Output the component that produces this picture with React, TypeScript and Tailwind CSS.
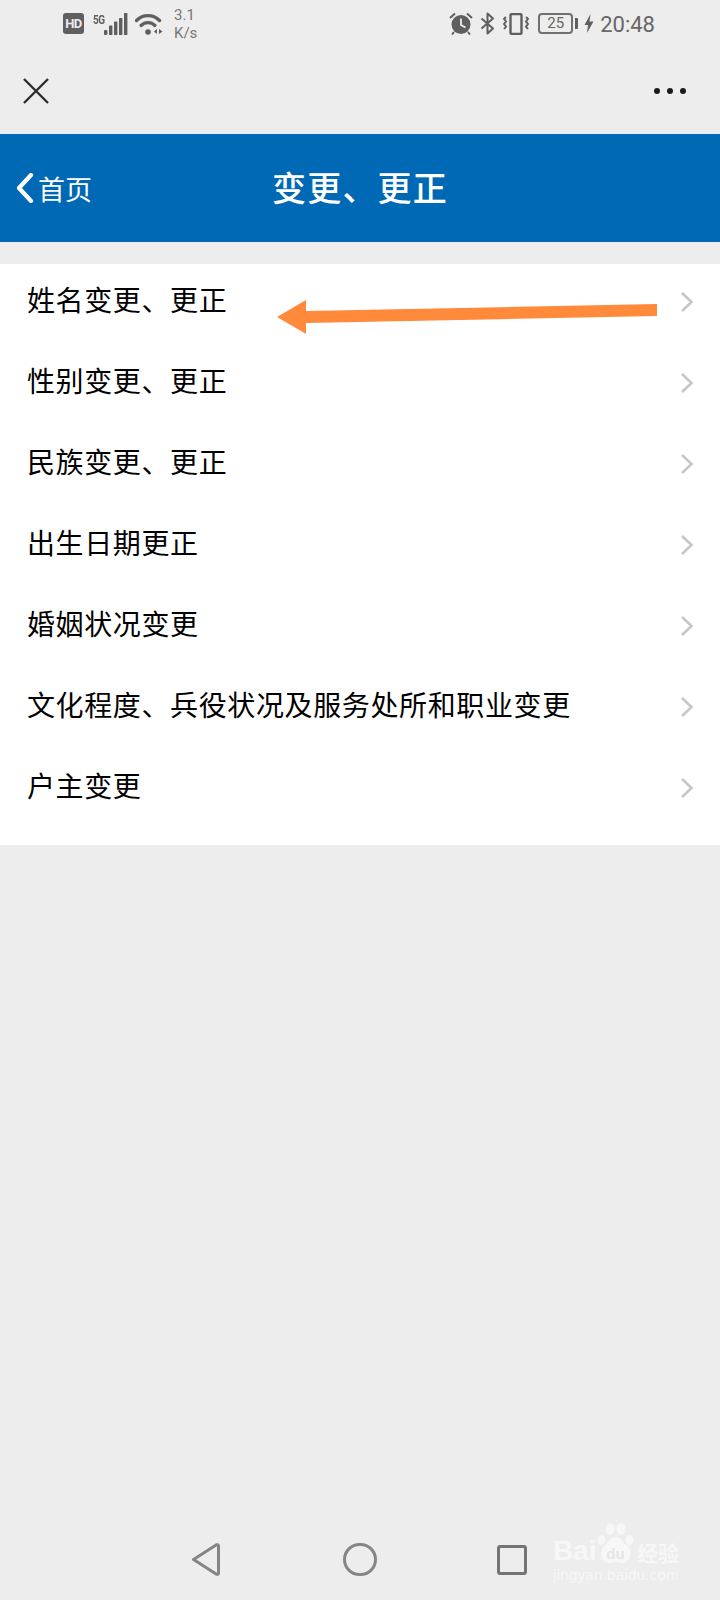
const cjk = "font-['Noto_Sans_CJK_SC','Liberation_Sans',sans-serif]";

const rows = [
  '姓名变更、更正',
  '性别变更、更正',
  '民族变更、更正',
  '出生日期更正',
  '婚姻状况变更',
  '文化程度、兵役状况及服务处所和职业变更',
  '户主变更',
];

function LeftStatus() {
  return (
    <div className="flex items-center">
      <div className="flex h-[21px] w-[21px] items-center justify-center rounded-[3px] bg-[#5f5f5f] font-['Roboto',sans-serif] text-[13px] font-bold leading-none text-[#ededed] [letter-spacing:-0.5px]">
        HD
      </div>
      <div className="ml-[9px] flex h-[22px] items-start">
        <span className="mt-[1px] inline-block w-[11px] origin-top-left scale-y-125 font-['Roboto',sans-serif] text-[10px] font-bold leading-[9px] text-[#5f5f5f] [letter-spacing:-0.4px]">5G</span>
        <svg width="24" height="22" viewBox="0 0 24 22" fill="#5f5f5f">
          <rect x="0" y="17" width="3.4" height="5" rx="1" />
          <rect x="5" y="12.5" width="3.4" height="9.5" rx="0.6" />
          <rect x="10" y="8.5" width="3.4" height="13.5" rx="0.6" />
          <rect x="15" y="5" width="3.4" height="17" rx="0.6" />
          <rect x="20" y="0" width="3.4" height="22" rx="0.6" />
        </svg>
      </div>
      <svg width="28" height="22" viewBox="0 0 28 22" className="ml-[7px]" fill="none">
        <path d="M1.5 7.5C8 1 18 1 24.5 7.5" stroke="#5f5f5f" strokeWidth="3.4" strokeLinecap="round" />
        <path d="M6 12.5C10 8.6 16 8.6 20 12.5" stroke="#5f5f5f" strokeWidth="3.2" strokeLinecap="round" />
        <circle cx="13" cy="19" r="2.8" fill="#5f5f5f" />
        <path d="M22 16v5l-3-2.5zM24 16v5l3.5-2.5z" fill="#5f5f5f" />
      </svg>
      <div className="ml-[11px] flex h-[32px] flex-col justify-between font-['Roboto',sans-serif] text-[15px] leading-[14px] text-[#777777]">
        <span>3.1</span>
        <span>K/s</span>
      </div>
    </div>
  );
}

function RightStatus() {
  return (
    <div className="flex items-center">
      <svg width="24" height="23" viewBox="0 0 24 23">
        <circle cx="12" cy="12.5" r="9.5" fill="#5f5f5f" />
        <path d="M12 6.5v6.5l4.5 2.5" stroke="#ededed" strokeWidth="1.8" fill="none" />
        <path d="M1 6l5-4.5M23 6l-5-4.500M5 20l-2 2.5M19 20l2 2.5" stroke="#5f5f5f" strokeWidth="2" fill="none" />
      </svg>
      <svg width="15" height="23" viewBox="0 0 15 23" fill="none" className="ml-[7px]">
        <path d="M1.5 6.5L13 16.5L7.5 21.5V1.5L13 6.5L1.5 16.5" stroke="#5f5f5f" strokeWidth="2" strokeLinejoin="round" />
      </svg>
      <svg width="26" height="22" viewBox="0 0 26 22" fill="none" className="ml-[8px]">
        <rect x="7.5" y="1" width="11" height="20" rx="1.5" stroke="#5f5f5f" strokeWidth="2.4" />
        <path d="M3 4l-2 2 2 2.500-2 2.500 2 2.500-2 2.500M23 4l2 2-2 2.500 2 2.500-2 2.500 2 2.500" stroke="#5f5f5f" strokeWidth="2" />
      </svg>
      <div className="ml-[9px] flex h-[21px] w-[35px] items-center justify-center rounded-[4px] border-2 border-[#707070] font-['Roboto',sans-serif] text-[15px] leading-none text-[#666666]">
        25
      </div>
      <div className="ml-[2px] h-[11px] w-[3px] rounded-r-[1px] bg-[#5f5f5f]" />
      <svg width="10" height="19" viewBox="0 0 10 19" className="ml-[6px]" fill="#5f5f5f">
        <path d="M6.5 0L0.5 11H4L3 19L9.500 7.500H5.500z" />
      </svg>
      <span className="ml-[6px] pt-[2px] font-['Roboto',sans-serif] text-[22px] leading-none text-[#666666]">20:48</span>
    </div>
  );
}

function Chevron() {
  return (
    <svg width="14" height="22" viewBox="0 0 14 22" fill="none">
      <path d="M2 2l9.500 9L2 20" stroke="#c7c7c7" strokeWidth="2.600" />
    </svg>
  );
}

function Watermark() {
  return (
    <div className="absolute bottom-[11px] left-[553px] flex h-[66px] w-[127px] flex-col text-[#f7f7f7]">
      <div className="flex h-[40px] items-end">
        <span className="w-[44px] font-['Liberation_Sans',sans-serif] text-[28px] font-bold leading-[24px]">Bai</span>
        <svg width="37" height="40" viewBox="0 0 37 40" fill="#f7f7f7">
          <ellipse cx="4.5" cy="17" rx="4" ry="5" />
          <ellipse cx="13" cy="6" rx="4.500" ry="6" />
          <ellipse cx="24" cy="6" rx="4.500" ry="6" />
          <ellipse cx="32.5" cy="17" rx="4" ry="5" />
          <path d="M18.500 14c6 0 7 6 12 9 5 4 4 17-5 17-3 0-4-1-7-1s-4 1-7 1C3 40 2 27 7 23c5-3 5.500-9 11.500-9z" />
          <text x="18.5" y="36" textAnchor="middle" fontSize="15" fontWeight="700" fontFamily="Liberation Sans" fill="#e4e4e4">du</text>
        </svg>
        <span className={`${cjk} ml-[3px] text-[21px] font-bold leading-[21px]`}>经验</span>
      </div>
      <span className="mt-[4px] whitespace-nowrap font-['Liberation_Sans',sans-serif] text-[15px] leading-[16px] [letter-spacing:0.3px]">jingyan.baidu.com</span>
    </div>
  );
}

export default function App() {
  return (
    <div className="relative flex h-[1600px] w-[720px] flex-col overflow-hidden bg-[#ededed]">
      <div className="flex h-[48px] items-center justify-between pb-[1px] pl-[63px] pr-[65px]">
        <LeftStatus />
        <RightStatus />
      </div>

      <div className="flex h-[86px] items-center justify-between pl-[22px] pr-[34px]">
        <svg width="28" height="28" viewBox="0 0 28 28" fill="none">
          <path d="M2 2l24 24M26 2L2 26" stroke="#2d2d2d" strokeWidth="2.400" />
        </svg>
        <div className="flex items-center gap-[7px]">
          <div className="h-[6px] w-[6px] rounded-full bg-[#1a1a1a]" />
          <div className="h-[6px] w-[6px] rounded-full bg-[#1a1a1a]" />
          <div className="h-[6px] w-[6px] rounded-full bg-[#1a1a1a]" />
        </div>
      </div>

      <div className="relative flex h-[108px] items-center justify-center bg-[#0069b5]">
        <div className="absolute left-[16px] top-[39px] flex items-center">
          <svg width="18" height="30" viewBox="0 0 18 30" fill="none">
            <path d="M15 2L3 15l12 13" stroke="#ffffff" strokeWidth="4.200" strokeLinecap="round" strokeLinejoin="round" />
          </svg>
          <span className={`${cjk} ml-[4px] text-[27px] leading-none text-white`}>首页</span>
        </div>
        <span className={`${cjk} pb-[2px] text-[34px] font-medium leading-none text-white [letter-spacing:1.2px]`}>变更、更正</span>
      </div>

      <div className="mt-[22px] flex flex-col gap-[5px] bg-white pb-[19px]">
        {rows.map((label) => (
          <div key={label} className="flex h-[76px] items-center justify-between pl-[27px] pr-[26px]">
            <span className={`${cjk} pb-[7px] text-[28px] leading-none text-black [letter-spacing:0.62px]`}>{label}</span>
            <Chevron />
          </div>
        ))}
      </div>

      {/* hand drawn arrow pasted over the first row */}
      <svg width="390" height="40" viewBox="0 0 390 40" className="absolute left-[272px] top-[298px] blur-[0.6px]" fill="#ff8a3c">
        <path d="M5 19L34 2V13L385 6V18L34 25V36z" />
      </svg>

      <div className="mt-auto flex h-[74px] items-start pl-[192px] pt-[17px]">
        <svg width="28" height="33" viewBox="0 0 28 33" fill="none">
          <path d="M1.500 16.500L24.500 1.800Q26.500 1.200 26.500 3V30Q26.500 31.800 24.500 31.200z" stroke="#858585" strokeWidth="3" strokeLinejoin="round" />
        </svg>
        <div className="ml-[123px] h-[33px] w-[34px] rounded-full border-[3px] border-[#858585]" />
        <div className="ml-[120px] mt-[2px] h-[30px] w-[30px] rounded-[3px] border-[3px] border-[#747474]" />
      </div>

      <Watermark />
    </div>
  );
}
